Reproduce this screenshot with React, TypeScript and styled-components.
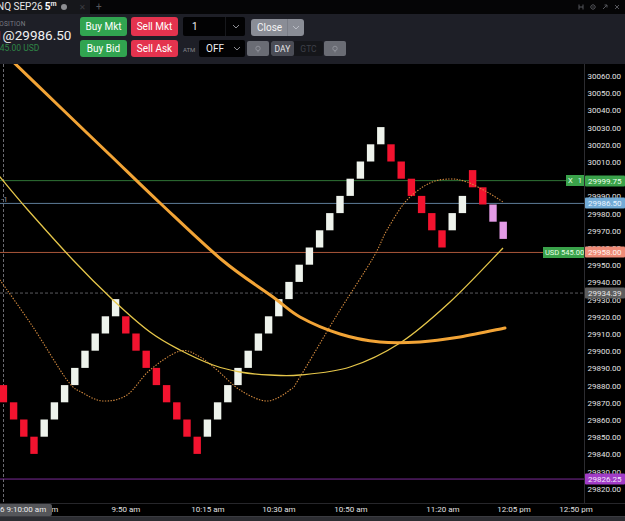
import React from "react";
import styled, { createGlobalStyle } from "styled-components";

const GlobalStyle = createGlobalStyle`
  html, body { margin: 0; padding: 0; background: #000; }
  body { font-family: Roboto, "Liberation Sans", Arial, sans-serif; }
  * { box-sizing: border-box; }
`;

const PLOT_W = 584;
const PLOT_H = 439;
const CHART_TOP = 64;
const lineY = (p: number) => 13 + (30060 - p) * 1.72;
const brickY = (p: number) => 11.5 + (30060 - p) * 1.72;

type Pt = [number, number];
function smoothPath(pts: Pt[]): string {
  let d = `M ${pts[0][0]} ${pts[0][1]}`;
  for (let i = 0; i < pts.length - 1; i++) {
    const p0 = pts[i - 1] || pts[i];
    const p1 = pts[i];
    const p2 = pts[i + 1];
    const p3 = pts[i + 2] || p2;
    const c1x = p1[0] + (p2[0] - p0[0]) / 6;
    const c1y = p1[1] + (p2[1] - p0[1]) / 6;
    const c2x = p2[0] - (p3[0] - p1[0]) / 6;
    const c2y = p2[1] - (p3[1] - p1[1]) / 6;
    d += ` C ${c1x.toFixed(1)} ${c1y.toFixed(1)}, ${c2x.toFixed(1)} ${c2y.toFixed(1)}, ${p2[0]} ${p2[1]}`;
  }
  return d;
}

const thickOrange: Pt[] = [
  [4, 53], [60, 107], [110, 155], [160, 203], [222, 260], [273, 297], [300, 317],
  [340, 334], [380, 342], [420, 342], [460, 337], [505, 328],
];
const thinYellow: Pt[] = [
  [-5, 171], [0, 177], [27, 209], [73, 260], [113, 300], [150, 332], [180, 350],
  [213, 365], [240, 372], [270, 375], [300, 375], [350, 367], [400, 343], [450, 302], [503, 248],
];
const dotted: Pt[] = [
  [-5, 273], [0, 280], [33, 327], [67, 380], [83, 393], [103, 401], [127, 395], [150, 370],
  [180, 351], [200, 357], [217, 370], [240, 390], [267, 401], [290, 390], [300, 377],
  [337, 315], [373, 258], [387, 230], [407, 200], [430, 183], [450, 179], [467, 182],
  [487, 192], [503, 202],
];

type Kind = "up" | "down" | "pink";
const runs: { kind: Kind; from: number; tops: number[] }[] = [
  { kind: "down", from: 0, tops: [29880, 29870, 29860, 29850] },
  { kind: "up", from: 4, tops: Array.from({ length: 8 }, (_, i) => 29860 + i * 10) },
  { kind: "down", from: 12, tops: Array.from({ length: 8 }, (_, i) => 29920 - i * 10) },
  { kind: "up", from: 20, tops: Array.from({ length: 18 }, (_, i) => 29860 + i * 10) },
  { kind: "down", from: 38, tops: Array.from({ length: 6 }, (_, i) => 30020 - i * 10) },
  { kind: "up", from: 44, tops: [29980, 29990] },
  { kind: "down", from: 46, tops: [30005, 29995] },
  { kind: "pink", from: 48, tops: [29985, 29975] },
];
const brickColor: Record<Kind, string> = { up: "#eef3ec", down: "#f3132f", pink: "#e39be6" };
const bricks = runs.flatMap((r) =>
  r.tops.map((top, i) => ({ idx: r.from + i, top, kind: r.kind }))
);

const levels = [
  { price: 29999.75, color: "#2f7436" },
  { price: 29986.5, color: "#5d7c98" },
  { price: 29958, color: "#a9573a" },
  { price: 29826.25, color: "#7a2b98" },
];

const ticks = Array.from({ length: 25 }, (_, i) => 30060 - i * 10);

const axisTags = [
  { price: 29999.75, text: "29999.75", bg: "#3aa24a", fg: "#eaffea" },
  { price: 29986.5, text: "29986.50", bg: "#72abd6", fg: "#e8f4ff" },
  { price: 29958, text: "29958.00", bg: "#ee8b78", fg: "#fff2ee" },
  { price: 29934.39, text: "29934.39", bg: "#5d5d5d", fg: "#e6e6e6" },
  { price: 29826.25, text: "29826.25", bg: "#a13cc6", fg: "#f6e8ff" },
];

const timeLabels = [
  { x: 44, text: "9:10 am" },
  { x: 126, text: "9:50 am" },
  { x: 208, text: "10:15 am" },
  { x: 279, text: "10:30 am" },
  { x: 351, text: "10:50 am" },
  { x: 443, text: "11:20 am" },
  { x: 514, text: "12:05 pm" },
  { x: 576, text: "12:50 pm" },
];

/* ---------- layout ---------- */

const Root = styled.div`
  width: 625px;
  height: 521px;
  display: flex;
  flex-direction: column;
  overflow: hidden;
  background: #000;
  color: #e6e6e6;
`;

const TabStrip = styled.div`
  height: 14px;
  display: flex;
  align-items: center;
  background: #050506;
`;

const Tab = styled.div`
  width: 90px;
  height: 14px;
  display: flex;
  align-items: center;
  background: #16171b;
  overflow: hidden;
`;

const TabTitle = styled.span`
  margin-left: -3px;
  font-size: 10px;
  line-height: 14px;
  color: #e8e8e8;
  white-space: nowrap;
  b { font-weight: 700; margin-left: 2px; color: #fff; }
  sup { font-size: 7px; vertical-align: 4px; line-height: 0; font-weight: 700; }
`;

const TabDot = styled.span`
  width: 6px;
  height: 6px;
  border-radius: 50%;
  background: #8d8e92;
  margin-left: 4px;
`;

const TabClose = styled.span`
  margin-left: auto;
  margin-right: 4px;
  font-size: 8px;
  color: #3b3c40;
`;

const AddTab = styled.span`
  margin-left: 6px;
  font-size: 10px;
  color: #55565a;
  line-height: 14px;
`;

const WindowIcons = styled.div`
  margin-left: auto;
  margin-right: 5px;
  display: flex;
  gap: 6px;
  align-items: center;
`;

const Header = styled.div`
  height: 50px;
  background: #1e1f27;
  display: flex;
  align-items: flex-start;
  overflow: hidden;
`;

const PositionBlock = styled.div`
  width: 85px;
  margin-left: -5px;
  padding-top: 6px;
  display: flex;
  flex-direction: column;
  white-space: nowrap;
`;

const PosLabel = styled.div`
  font-size: 6.5px;
  line-height: 8px;
  letter-spacing: 0.2px;
  color: #7c7d84;
`;

const PosPrice = styled.div`
  font-size: 13.5px;
  line-height: 15px;
  color: #f2f2f2;
  span { color: #e5334e; }
`;

const PosPnl = styled.div`
  font-size: 8.5px;
  line-height: 10px;
  color: #2f8646;
`;

const Controls = styled.div`
  display: flex;
  flex-direction: column;
  gap: 4px;
  padding-top: 3px;
`;

const Row = styled.div<{ $h: number }>`
  display: flex;
  align-items: center;
  height: ${(p) => p.$h}px;
`;

const TradeButton = styled.div<{ $tone: "buy" | "sell"; $ml?: number }>`
  width: 47px;
  height: 100%;
  margin-left: ${(p) => p.$ml ?? 0}px;
  border-radius: 3px;
  background: ${(p) => (p.$tone === "buy" ? "#31a450" : "#e4334e")};
  color: #fff;
  font-size: 10px;
  display: flex;
  align-items: center;
  justify-content: center;
`;

const SelectBox = styled.div<{ $w: number; $ml: number }>`
  width: ${(p) => p.$w}px;
  height: 100%;
  margin-left: ${(p) => p.$ml}px;
  background: #020203;
  border-radius: 2px;
  display: flex;
  align-items: center;
  color: #f0f0f0;
  font-size: 10px;
`;

const SelectValue = styled.div<{ $pl: number }>`
  flex: 1;
  padding-left: ${(p) => p.$pl}px;
`;

const SelectArrow = styled.div<{ $w: number; $divider?: boolean }>`
  width: ${(p) => p.$w}px;
  height: 100%;
  display: flex;
  align-items: center;
  justify-content: center;
  border-left: 1px solid ${(p) => (p.$divider ? "#17181c" : "transparent")};
  color: #8e8f95;
`;

const CloseButton = styled.div`
  width: 53px;
  height: 17px;
  margin-left: 6px;
  margin-top: 2px;
  border-radius: 3px;
  background: #8a8d96;
  display: flex;
  align-items: center;
  color: #f3f3f3;
  font-size: 10px;
`;

const CloseText = styled.div`
  flex: 1;
  padding-left: 6px;
`;

const CloseArrow = styled.div`
  width: 17px;
  height: 100%;
  border-left: 1px solid #7b7e87;
  display: flex;
  align-items: center;
  justify-content: center;
  color: #b9bcc4;
`;

const AtmLabel = styled.div`
  width: 14px;
  margin-left: 5px;
  margin-top: 2px;
  font-size: 6px;
  color: #85868c;
`;

const IconButton = styled.div<{ $ml: number }>`
  width: 22px;
  height: 15px;
  margin-left: ${(p) => p.$ml}px;
  border-radius: 2px;
  background: #6a6c74;
  display: flex;
  align-items: center;
  justify-content: center;
`;

const Segmented = styled.div`
  width: 52px;
  height: 15px;
  margin-left: 2px;
  border-radius: 2px;
  background: #15161a;
  display: flex;
  overflow: hidden;
`;

const Segment = styled.div<{ $active?: boolean; $w: number }>`
  width: ${(p) => p.$w}px;
  display: flex;
  align-items: center;
  justify-content: center;
  font-size: 8.5px;
  border-radius: 2px;
  background: ${(p) => (p.$active ? "#4b4d56" : "transparent")};
  color: ${(p) => (p.$active ? "#e4e4e6" : "#3e4048")};
`;

const ChartArea = styled.div`
  height: ${PLOT_H}px;
  display: flex;
`;

const Plot = styled.div`
  width: ${PLOT_W}px;
  height: 100%;
  position: relative;
  overflow: hidden;
`;

const PlotSvg = styled.svg`
  display: block;
`;

const PlotTag = styled.div<{ $w: number }>`
  position: absolute;
  right: 0;
  width: ${(p) => p.$w}px;
  height: 11px;
  background: #3aa24a;
  color: #e6ffe6;
  font-size: 7.5px;
  line-height: 11px;
  display: flex;
  justify-content: space-between;
  padding: 0 2px;
  white-space: nowrap;
`;

const PriceAxis = styled.div`
  flex: 1;
  position: relative;
  border-left: 1px solid #2c2c30;
`;

const Tick = styled.div`
  position: absolute;
  right: 4px;
  font-size: 8px;
  line-height: 10px;
  color: #e2e2e2;
  transform: translateY(-50%);
`;

const AxisTag = styled.div<{ $bg: string; $fg: string }>`
  position: absolute;
  left: 0;
  right: 0;
  height: 11px;
  transform: translateY(-50%);
  background: ${(p) => p.$bg};
  color: ${(p) => p.$fg};
  font-size: 8px;
  line-height: 11px;
  padding-left: 3px;
  border-radius: 1px;
`;

const TimeAxis = styled.div`
  height: 13px;
  position: relative;
  border-top: 1px solid #26262a;
  overflow: hidden;
`;

const TimeLabel = styled.div`
  position: absolute;
  top: 0;
  font-size: 8px;
  line-height: 12px;
  color: #e0e0e0;
  transform: translateX(-50%);
  white-space: nowrap;
`;

const CrossTimeTag = styled.div`
  position: absolute;
  left: 0;
  top: 0;
  width: 52px;
  height: 12px;
  background: #55565a;
  color: #ececec;
  font-size: 8px;
  line-height: 12px;
  white-space: nowrap;
  overflow: hidden;
  border-radius: 0 2px 2px 0;
`;

const BottomBar = styled.div`
  flex: 1;
  background: #2c2d32;
  border-top: 1px solid #3a3b40;
`;

/* ---------- small icons ---------- */

const Chevron = ({ color = "currentColor" }: { color?: string }) => (
  <svg width="8" height="5" viewBox="0 0 8 5">
    <path d="M1 1 L4 4 L7 1" fill="none" stroke={color} strokeWidth="1" />
  </svg>
);

const PinIcon = () => (
  <svg width="8" height="8" viewBox="0 0 8 8">
    <circle cx="4" cy="3.4" r="2.2" fill="none" stroke="#8f9199" strokeWidth="1" />
    <path d="M4 5.6 V7.4" stroke="#8f9199" strokeWidth="1" />
  </svg>
);

const WinIcon = ({ d }: { d: string }) => (
  <svg width="6" height="6" viewBox="0 0 6 6">
    <path d={d} fill="none" stroke="#55565b" strokeWidth="1" />
  </svg>
);

export default function App() {
  return (
    <>
      <GlobalStyle />
      <Root>
        <TabStrip>
          <Tab>
            <TabTitle>
              NQ SEP26<b>5</b>
              <sup>m</sup>
            </TabTitle>
            <TabDot />
            <TabClose>✕</TabClose>
          </Tab>
          <AddTab>+</AddTab>
          <WindowIcons>
            <WinIcon d="M1 0.5 V5.5 M5 0.5 V5.5 M1 3 H5" />
            <WinIcon d="M3 0.8 A2.2 2.2 0 1 1 2.99 0.8 M3 2.2 V3.8" />
            <WinIcon d="M1 5 L5 1 M2.5 1 H5 V3.5" />
            <WinIcon d="M1 1 L5 5 M5 1 L1 5" />
          </WindowIcons>
        </TabStrip>

        <Header>
          <PositionBlock>
            <PosLabel>POSITION</PosLabel>
            <PosPrice>
              <span>1</span>@29986.50
            </PosPrice>
            <PosPnl>545.00 USD</PosPnl>
          </PositionBlock>
          <Controls>
            <Row $h={19}>
              <TradeButton $tone="buy">Buy Mkt</TradeButton>
              <TradeButton $tone="sell" $ml={4}>
                Sell Mkt
              </TradeButton>
              <SelectBox $w={62} $ml={5}>
                <SelectValue $pl={9}>1</SelectValue>
                <SelectArrow $w={20} $divider>
                  <Chevron />
                </SelectArrow>
              </SelectBox>
              <CloseButton>
                <CloseText>Close</CloseText>
                <CloseArrow>
                  <Chevron />
                </CloseArrow>
              </CloseButton>
            </Row>
            <Row $h={17}>
              <TradeButton $tone="buy">Buy Bid</TradeButton>
              <TradeButton $tone="sell" $ml={4}>
                Sell Ask
              </TradeButton>
              <AtmLabel>ATM</AtmLabel>
              <SelectBox $w={46} $ml={2}>
                <SelectValue $pl={7}>OFF</SelectValue>
                <SelectArrow $w={17}>
                  <Chevron />
                </SelectArrow>
              </SelectBox>
              <IconButton $ml={2}>
                <PinIcon />
              </IconButton>
              <Segmented>
                <Segment $active $w={23}>
                  DAY
                </Segment>
                <Segment $w={29}>GTC</Segment>
              </Segmented>
              <IconButton $ml={1}>
                <PinIcon />
              </IconButton>
            </Row>
          </Controls>
        </Header>

        <ChartArea>
          <Plot>
            <PlotSvg width={PLOT_W} height={PLOT_H} viewBox={`0 0 ${PLOT_W} ${PLOT_H}`}>
              {levels.map((l) => (
                <line
                  key={l.price}
                  x1={0}
                  x2={PLOT_W}
                  y1={lineY(l.price)}
                  y2={lineY(l.price)}
                  stroke={l.color}
                  strokeWidth={1}
                />
              ))}
              <line
                x1={0}
                x2={PLOT_W}
                y1={lineY(29934.39)}
                y2={lineY(29934.39)}
                stroke="#5a5a5e"
                strokeWidth={1}
                strokeDasharray="3 2"
              />
              <line x1={3.5} x2={3.5} y1={0} y2={PLOT_H} stroke="#6a6a70" strokeWidth={1} strokeDasharray="3 2" />
              <text x={1} y={202 - CHART_TOP} fontSize="8" fill="#9a9aa0" fontFamily="Roboto, sans-serif">
                -1
              </text>
              {bricks.map((b) => (
                <rect
                  key={b.idx}
                  x={b.idx * 10.2 - 0.3}
                  y={brickY(b.top)}
                  width={7.4}
                  height={17.2}
                  fill={brickColor[b.kind]}
                />
              ))}
              <g transform={`translate(0 ${-CHART_TOP})`}>
                <path d={smoothPath(dotted)} fill="none" stroke="#d38a3e" strokeWidth={1.1} strokeDasharray="1.4 1.4" />
                <path d={smoothPath(thinYellow)} fill="none" stroke="#e5c64a" strokeWidth={1.3} />
                <path d={smoothPath(thickOrange)} fill="none" stroke="#f2a436" strokeWidth={3} strokeLinecap="round" />
              </g>
            </PlotSvg>
            <PlotTag $w={18} style={{ top: lineY(29999.75) - 5.5 }}>
              <span>X</span>
              <span>1</span>
            </PlotTag>
            <PlotTag $w={41} style={{ top: lineY(29958) - 5.5 }}>
              <span>USD 545.00</span>
            </PlotTag>
          </Plot>
          <PriceAxis>
            {ticks.map((t) => (
              <Tick key={t} style={{ top: lineY(t) }}>
                {t.toFixed(2)}
              </Tick>
            ))}
            {axisTags.map((a) => (
              <AxisTag key={a.text} $bg={a.bg} $fg={a.fg} style={{ top: lineY(a.price) }}>
                {a.text}
              </AxisTag>
            ))}
          </PriceAxis>
        </ChartArea>

        <TimeAxis>
          {timeLabels.map((t) => (
            <TimeLabel key={t.text} style={{ left: t.x }}>
              {t.text}
            </TimeLabel>
          ))}
          <CrossTimeTag>6 9:10:00 am</CrossTimeTag>
        </TimeAxis>
        <BottomBar />
      </Root>
    </>
  );
}
